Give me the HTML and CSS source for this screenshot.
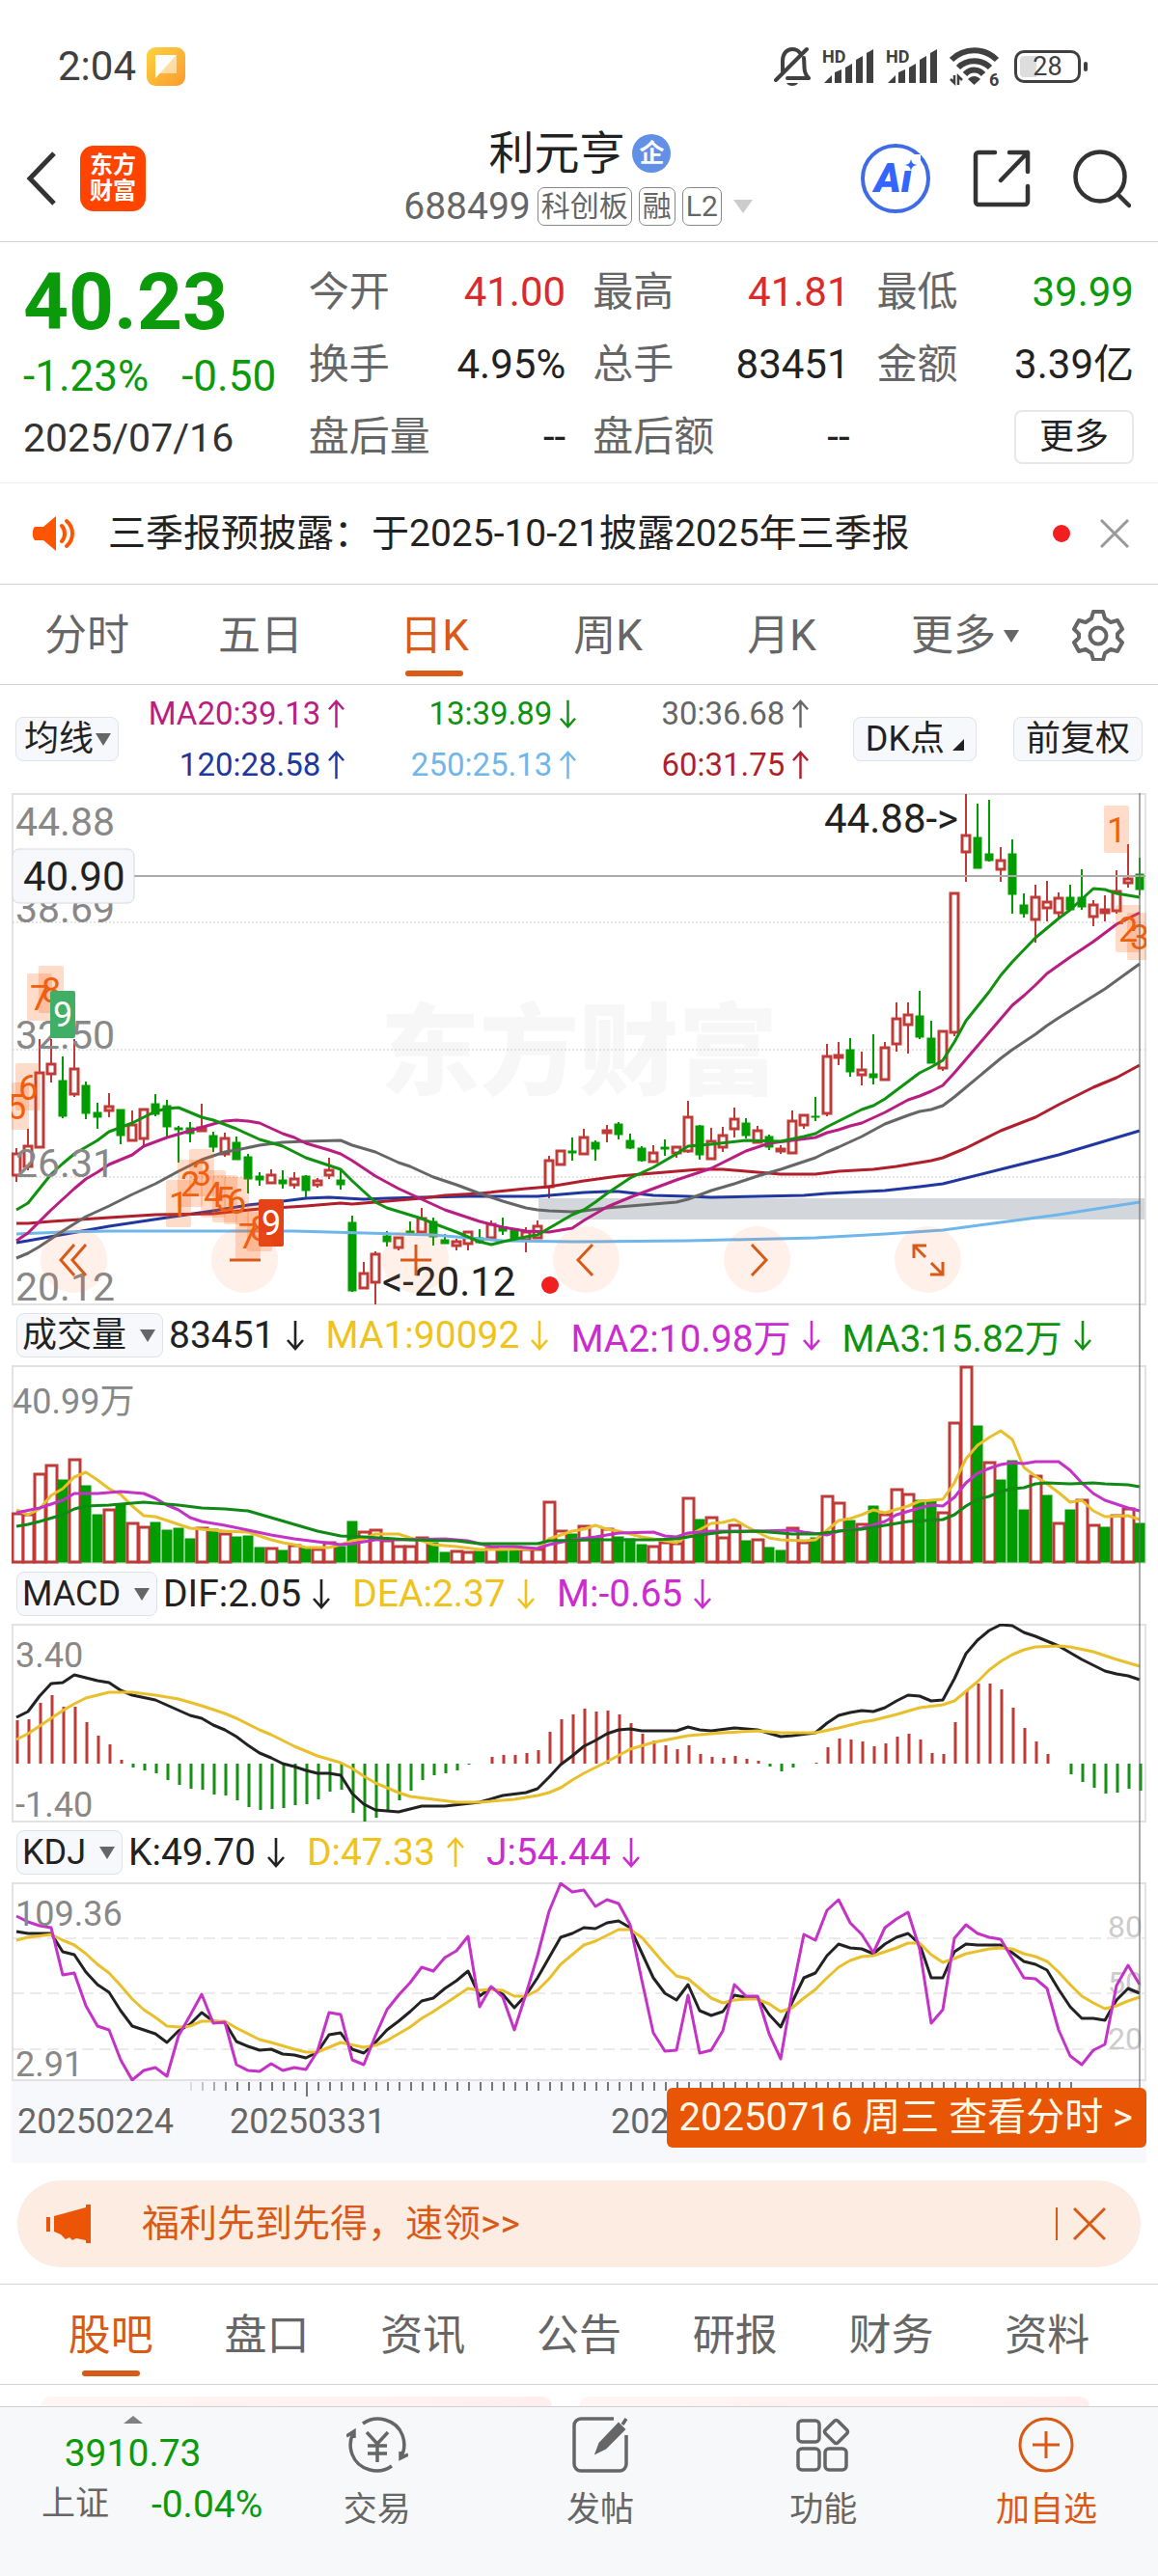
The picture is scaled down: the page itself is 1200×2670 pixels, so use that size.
FILE: index.html
```html
<!DOCTYPE html>
<html lang="zh-CN">
<head>
<meta charset="UTF-8" />
<meta name="viewport" content="width=device-width, initial-scale=1" />
<title>利元亨 688499</title>
<link rel="stylesheet" href="styles.css">
</head>
<body>

<svg class="defs" aria-hidden="true">
  <symbol id="up" viewBox="0 0 18 32"><path d="M9 31V2M1 11L9 2l8 9" fill="none" stroke="currentColor" stroke-width="2.6"/></symbol>
  <symbol id="down" viewBox="0 0 18 32"><path d="M9 1v29M1 21l8 9 8-9" fill="none" stroke="currentColor" stroke-width="2.6"/></symbol>
  <symbol id="signal" viewBox="0 0 54 38">
    <text x="0" y="15" font-size="18" font-weight="700" fill="currentColor">HD</text>
    <path d="M2 36l8-8v8zM13 36V25l7-3v14zM24 36V20l7-4v20zM35 36V12l7-4v28zM46 36V5l7-4v35z" fill="currentColor"/>
  </symbol>
</svg>

<div class="status">
  <span class="time">2:04</span>
  <svg class="note" viewBox="0 0 40 40">
    <defs><linearGradient id="gold" x1="0" y1="0" x2="1" y2="1"><stop offset="0" stop-color="#fbd440"/><stop offset="1" stop-color="#fb9a2e"/></linearGradient></defs>
    <rect width="40" height="40" rx="9" fill="url(#gold)"/>
    <path d="M9 8h22L9 32z" fill="#fff"/><path d="M31 8v19H13z" fill="#fff" opacity=".55"/>
  </svg>
  <div class="status-icons">
    <svg width="38" height="42" viewBox="0 0 38 42" fill="none" stroke="currentColor" stroke-width="4">
      <path d="M9 26V15c0-7 4-12 10-12 3 0 6 1 8 4M31 12c1 9-1 15 5 21H14M2 35L34 3" stroke-linecap="round" stroke-linejoin="round"/>
      <path d="M13 38h12c-2 4-10 4-12 0z" fill="currentColor" stroke="none"/>
    </svg>
    <svg width="54" height="38"><use href="#signal"/></svg>
    <svg width="54" height="38"><use href="#signal"/></svg>
    <svg width="52" height="42" viewBox="0 0 52 42" fill="none" stroke="currentColor" stroke-width="6">
      <path d="M2 14c13-13 34-13 47 0M9 22c9-9 24-9 33 0M16 29c5-6 14-6 19 0"/>
      <path d="M19 34l6.500 6 6.500-6c-4-4-9-4-13 0z" fill="currentColor" stroke="none"/>
      <path d="M1 34l4 4V30M13 35l-4-4v9" stroke-width="2.500"/>
      <text x="41" y="41" font-size="18" font-weight="700" fill="currentColor" stroke="none">6</text>
    </svg>
    <div class="battery">28</div>
  </div>
</div>

<header class="header">
  <a href="#" class="back" aria-label="返回"><svg width="34" height="58" viewBox="0 0 34 58"><path d="M30 3L5 29l25 26" fill="none" stroke="#333" stroke-width="5"/></svg></a>
  <a href="#" class="logo">东方<br>财富</a>
  <div class="stock">
    <h1>利元亨<span class="corp">企</span></h1>
    <div class="code">688499 <span class="tag">科创板</span><span class="tag">融</span><span class="tag">L2</span><i class="caret"></i></div>
  </div>
  <div class="actions">
    <button aria-label="AI"><svg width="72" height="74" viewBox="0 0 72 74"><circle cx="36" cy="37" r="34" fill="none" stroke="#3f6be6" stroke-width="4"/><text x="14" y="51" font-size="42" font-weight="900" font-style="italic" fill="#3366ff">Ai</text><path d="M44 12h18v17H44z" fill="#fff"/><path d="M52 17c1 4 2 5 6 6-4 1-5 2-6 6-1-4-2-5-6-6 4-1 5-2 6-6z" fill="#3366ff"/></svg></button>
    <button aria-label="分享"><svg width="60" height="60" viewBox="0 0 60 60" fill="none" stroke="#333" stroke-width="4.500" stroke-linecap="round" stroke-linejoin="round"><path d="M23 3H6a3 3 0 0 0-3 3v48a3 3 0 0 0 3 3h48a3 3 0 0 0 3-3V38M38 3h19v20M57 3L29 32"/></svg></button>
    <button aria-label="搜索"><svg width="60" height="62" viewBox="0 0 60 62" fill="none" stroke="#333" stroke-width="4.500" stroke-linecap="round"><circle cx="28" cy="29" r="25.500"/><path d="M47 48l11 11"/></svg></button>
  </div>
</header>

<section class="quote">
  <div class="price down">
    <div class="last">40.23</div>
    <div class="change"><span>-1.23%</span><span>-0.50</span></div>
    <div class="date">2025/07/16</div>
  </div>
  <dl class="stats">
    <div><dt>今开</dt><dd class="up">41.00</dd></div>
    <div><dt>最高</dt><dd class="up">41.81</dd></div>
    <div><dt>最低</dt><dd class="down">39.99</dd></div>
    <div><dt>换手</dt><dd>4.95%</dd></div>
    <div><dt>总手</dt><dd>83451</dd></div>
    <div><dt>金额</dt><dd>3.39亿</dd></div>
    <div><dt>盘后量</dt><dd>--</dd></div>
    <div><dt>盘后额</dt><dd>--</dd></div>
    <div class="more"><button>更多</button></div>
  </dl>
</section>

<section class="notice">
  <svg width="46" height="38" viewBox="0 0 46 38" fill="none" stroke="#ff5500" stroke-width="4">
    <path d="M3 12h9L25 1v36L12 26H3c-3-3-3-11 0-14z" fill="#ff5500" stroke="none"/>
    <path d="M31 11c4 4 4 12 0 16M36 6c8 7 8 19 0 26" stroke-linecap="round"/>
  </svg>
  <a href="#">三季报预披露：于2025-10-21披露2025年三季报</a>
  <i class="dot"></i>
  <button aria-label="关闭"><svg width="30" height="30" viewBox="0 0 30 30"><path d="M1 1l28 28M29 1L1 29" stroke="#999" stroke-width="3"/></svg></button>
</section>

<nav class="periods">
  <a href="#">分时</a>
  <a href="#">五日</a>
  <a href="#" class="active">日K</a>
  <a href="#">周K</a>
  <a href="#">月K</a>
  <button class="period-more">更多<i class="caret"></i></button>
  <button class="gear" aria-label="设置"><svg width="54" height="54" viewBox="0 0 54 54" fill="none" stroke="#666" stroke-width="4"><path d="M22 3h10l2 7 6 4 7-2 5 9-5 5v4l5 5-5 9-7-2-6 4-2 7H22l-2-7-6-4-7 2-5-9 5-5v-4l-5-5 5-9 7 2 6-4z" stroke-linejoin="round"/><circle cx="27" cy="28" r="8.500"/></svg></button>
</nav>

<section class="averages">
  <label class="pick"><select aria-label="主图指标"><option>均线</option></select></label>
  <div class="ma">
    <span class="c-ma20">MA20:39.13<svg><use href="#up"/></svg></span>
    <span class="c-green">13:39.89<svg><use href="#down"/></svg></span>
    <span class="c-gray">30:36.68<svg><use href="#up"/></svg></span>
    <span class="c-blue">120:28.58<svg><use href="#up"/></svg></span>
    <span class="c-sky">250:25.13<svg><use href="#up"/></svg></span>
    <span class="c-red">60:31.75<svg><use href="#up"/></svg></span>
  </div>
  <div class="chips">
    <button class="chip dk">DK点</button>
    <button class="chip">前复权</button>
  </div>
</section>

<section class="charts">
  <div class="main-chart">
    <svg id="kline" viewBox="0 -1 1176 531"></svg>
    <div class="tools">
      <button aria-label="最左"><svg viewBox="0 0 40 40"><path d="M20 4L6 20l14 16M32 4L18 20l14 16"/></svg></button>
      <button aria-label="缩小"><svg viewBox="0 0 40 40"><path d="M4 20h32"/></svg></button>
      <button aria-label="放大"><svg viewBox="0 0 40 40"><path d="M4 20h32M20 4v32"/></svg></button>
      <button aria-label="左移"><svg viewBox="0 0 40 40"><path d="M26 4L11 20l15 16"/></svg></button>
      <button aria-label="右移"><svg viewBox="0 0 40 40"><path d="M14 4l15 16-15 16"/></svg></button>
      <button aria-label="全屏"><svg viewBox="0 0 40 40"><path d="M5 18V5h13M5 5l12 12M22 35h13V22M35 35L23 23"/></svg></button>
    </div>
  </div>

  <div class="legend">
    <label class="pick wide"><select aria-label="副图一"><option>成交量</option></select></label>
    <span>83451<svg><use href="#down"/></svg></span>
    <span class="c-yellow">MA1:90092<svg><use href="#down"/></svg></span>
    <span class="c-purple">MA2:10.98万<svg><use href="#down"/></svg></span>
    <span class="c-green">MA3:15.82万<svg><use href="#down"/></svg></span>
  </div>
  <svg id="volume" viewBox="0 -1 1176 206"></svg>

  <div class="legend">
    <label class="pick wide"><select aria-label="副图二"><option>MACD</option></select></label>
    <span>DIF:2.05<svg><use href="#down"/></svg></span>
    <span class="c-yellow">DEA:2.37<svg><use href="#down"/></svg></span>
    <span class="c-purple">M:-0.65<svg><use href="#down"/></svg></span>
  </div>
  <svg id="macd" viewBox="0 -1 1176 206"></svg>

  <div class="legend">
    <label class="pick wide"><select aria-label="副图三"><option>KDJ</option></select></label>
    <span>K:49.70<svg><use href="#down"/></svg></span>
    <span class="c-yellow">D:47.33<svg><use href="#up"/></svg></span>
    <span class="c-purple">J:54.44<svg><use href="#down"/></svg></span>
  </div>
  <svg id="kdj" viewBox="0 -1 1176 206"></svg>

  <svg id="axis" viewBox="0 0 1176 85"></svg>
  <i class="crosshair"></i>
  <a href="#" class="day">20250716 周三 查看分时 &gt;</a>
</section>

<section class="promo">
  <svg width="46" height="40" viewBox="0 0 46 40" fill="#eb5505"><path d="M0 13h4v15H0zM8 12L41 3V0h5v40h-5v-3l-10-2-4 2-3-3-4 2-5-5-7-3z"/></svg>
  <a href="#">福利先到先得，速领&gt;&gt;</a>
  <button aria-label="关闭"><svg width="34" height="34" viewBox="0 0 34 34"><path d="M1 1l32 32M33 1L1 33" stroke="#d95a16" stroke-width="3"/></svg></button>
</section>

<nav class="sections">
  <a href="#" class="active">股吧</a>
  <a href="#">盘口</a>
  <a href="#">资讯</a>
  <a href="#">公告</a>
  <a href="#">研报</a>
  <a href="#">财务</a>
  <a href="#">资料</a>
</nav>

<div class="cards"><div></div><div></div></div>

<footer class="bar">
  <a href="#" class="index">
    <i class="tri"></i>
    <b>3910.73</b>
    <span class="row"><span>上证</span><span class="down">-0.04%</span></span>
  </a>
  <a href="#">
    <svg viewBox="0 0 64 60" fill="none" stroke="#666" stroke-width="3.500"><path d="M17 8C31-2 52 4 58 20c3 8 2 16-1 22M47 52C33 62 12 56 6 40c-3-8-2-16 1-22M0 21l8-5v7M64 40l-8 4v-7M21 17l11 12 11-12M32 29v19M22 31h20M22 39h20"/></svg>
    交易
  </a>
  <a href="#">
    <svg viewBox="0 0 64 60" fill="none" stroke="#666" stroke-width="3.500"><path d="M46 3H12a7 7 0 0 0-7 7v40a7 7 0 0 0 7 7h40a7 7 0 0 0 7-7V20"/><path d="M55 9l4-6M29 37l3-8L51 9l5 5-19 19z" fill="#666"/></svg>
    发帖
  </a>
  <a href="#">
    <svg viewBox="0 0 64 60" fill="none" stroke="#666" stroke-width="3.500"><rect x="6" y="5" width="22" height="22" rx="4"/><rect x="6" y="34" width="22" height="22" rx="4"/><rect x="34" y="34" width="22" height="22" rx="4"/><path d="M43.500 5.500q2-2 4 0l9 9q2 2 0 4l-9 9q-2 2-4 0l-9-9q-2-2 0-4z"/></svg>
    功能
  </a>
  <a href="#" class="add">
    <svg viewBox="0 0 64 60" fill="none" stroke="#d95a16" stroke-width="3"><circle cx="32" cy="30" r="27"/><path d="M18 30h28M32 16v28"/></svg>
    加自选
  </a>
</footer>

<script src="script.js"></script>
</body>
</html>
```

FILE: styles.css
```css
* {
  box-sizing: border-box;
}
body {
  margin: 0;
  background: #fff;
  color: #222;
  font-family: Roboto, "Noto Sans CJK SC", sans-serif;
  font-size: 42px;
}
a {
  color: inherit;
  text-decoration: none;
}
button, select {
  font: inherit;
  color: inherit;
  background: none;
  border: 0;
  padding: 0;
  margin: 0;
}
svg {
  display: block;
}
.defs {
  position: absolute;
  width: 0;
  height: 0;
}
.up { color: #d92b2b; }
.down { color: #0a9a0a; }
.c-ma20 { color: #b91d82; }
.c-green { color: #0f930f; }
.c-gray { color: #666; }
.c-blue { color: #2137a0; }
.c-sky { color: #6fb7ea; }
.c-red { color: #b01f2b; }
.c-yellow { color: #efc31c; }
.c-purple { color: #cb2bd0; }

.caret {
  display: inline-block;
  border: 8px solid transparent;
  border-top: 13px solid #666;
  border-bottom: 0;
}

/* status bar */
.status {
  display: flex;
  align-items: center;
  padding: 44px 80px 0 60px;
  line-height: 50px;
  color: #404040;
}
.note {
  width: 40px;
  height: 40px;
  margin-left: 11px;
}
.status-icons {
  display: flex;
  align-items: center;
  gap: 12px;
  margin-left: auto;
}
.battery {
  position: relative;
  width: 69px;
  height: 34px;
  margin-left: 3px;
  border: 3px solid #404040;
  border-radius: 10px;
  background: linear-gradient(90deg, #ddd 32%, #fff 32%);
  box-shadow: inset 0 0 0 3px #fff;
  font-size: 27px;
  line-height: 29px;
  text-align: center;
}
.battery::after {
  content: "";
  position: absolute;
  right: -10px;
  top: 9px;
  width: 4px;
  height: 10px;
  border-radius: 2px;
  background: #404040;
}

/* header */
.header {
  display: grid;
  grid-template-columns: 1fr auto 1fr;
  grid-template-areas: "left stock right";
  align-items: center;
  padding: 34px 28px 9px 26px;
  border-bottom: 1px solid #d5d5d5;
}
.back {
  grid-area: left;
}
.logo {
  grid-area: left;
  width: 68px;
  margin-left: 57px;
  padding: 7px 0;
  border-radius: 14px;
  background: #ff4400;
  color: #fff;
  font-size: 24px;
  font-weight: 700;
  line-height: 27px;
  text-align: center;
}
.stock {
  grid-area: stock;
  padding-top: 3px;
  text-align: center;
}
.stock h1 {
  display: flex;
  align-items: center;
  justify-content: center;
  gap: 8px;
  margin: 0;
  padding-left: 4px;
  font-size: 47px;
  font-weight: 400;
  line-height: 56px;
}
.corp {
  width: 40px;
  border-radius: 50%;
  background: #6190e6;
  color: #fff;
  font-size: 26px;
  font-weight: 700;
  line-height: 40px;
}
.code {
  display: flex;
  align-items: center;
  gap: 7px;
  color: #666;
  font-size: 39px;
  line-height: 54px;
}
.tag {
  padding: 0 3px;
  border: 1px solid #888;
  border-radius: 7px;
  font-size: 30px;
  line-height: 38px;
}
.code .caret {
  margin-left: 5px;
  border-width: 14px 10px 0;
  border-top-color: #ccc;
}
.actions {
  grid-area: right;
  display: flex;
  align-items: center;
  justify-content: flex-end;
  gap: 44px;
}

/* quote */
.quote {
  display: flex;
  padding: 14px 25px 10px 24px;
  border-bottom: 1px solid #eee;
}
.price {
  flex: 0 0 25%;
  margin-right: 8px;
  padding-top: 6px;
}
.last {
  font-size: 82px;
  font-weight: 700;
  line-height: 84px;
}
.change {
  display: flex;
  gap: 34px;
  font-size: 44px;
  line-height: 70px;
}
.date {
  color: #333;
  font-size: 41px;
  line-height: 58px;
}
.stats {
  flex: 1;
  display: grid;
  grid-template-columns: repeat(3, 1fr);
  column-gap: 28px;
  margin: 0;
  line-height: 75px;
}
.stats div {
  display: flex;
  justify-content: space-between;
}
.stats dt {
  color: #666;
}
.stats dd {
  margin: 0;
}
.stats .more {
  justify-content: flex-end;
  align-items: center;
}
.more button {
  padding: 0 24px;
  border: 2px solid #e8e8e8;
  border-radius: 8px;
  font-size: 36px;
  line-height: 52px;
}

/* notice */
.notice {
  display: flex;
  align-items: center;
  padding: 0 30px 0 33px;
  border-bottom: 1px solid #d5d5d5;
  font-size: 39px;
  line-height: 104px;
}
.notice a {
  flex: 1;
  margin-left: 33px;
}
.dot {
  width: 18px;
  height: 18px;
  margin-right: 31px;
  border-radius: 50%;
  background: #f02020;
}

/* tabs */
.periods, .sections {
  display: flex;
  border-bottom: 1px solid #d5d5d5;
  color: #666;
  font-size: 44px;
  line-height: 99px;
  text-align: center;
}
.periods {
  padding-right: 24px;
}
.periods > * {
  flex: 180;
  padding-top: 4px;
}
.periods .period-more {
  flex: 200;
}
.periods .gear {
  flex: 76;
  display: flex;
  align-items: center;
  justify-content: center;
  padding-top: 0;
}
.period-more .caret {
  margin: 0 0 8px 8px;
}
.active {
  position: relative;
  color: #d95a16;
}
.active::after {
  content: "";
  position: absolute;
  left: 50%;
  bottom: 8px;
  width: 60px;
  height: 6px;
  margin-left: -30px;
  border-radius: 3px;
  background: #d95a16;
}

/* moving averages */
.averages {
  display: flex;
  align-items: center;
  justify-content: space-between;
  padding: 3px 16px;
  font-size: 36px;
}
.pick {
  position: relative;
  display: block;
}
.pick select {
  display: block;
  appearance: none;
  height: 46px;
  padding: 0 24px 0 8px;
  border: 1px solid #dfe2e6;
  border-radius: 8px;
  background: #f7f8fb;
  font-size: 36px;
  line-height: 44px;
}
.pick::after {
  content: "";
  position: absolute;
  right: 8px;
  top: 17px;
  border: 8px solid transparent;
  border-top: 13px solid #666;
  border-bottom: 0;
  pointer-events: none;
}
.pick.wide select {
  padding: 0 36px 0 5px;
}
.ma {
  flex: 0 0 712px;
  display: grid;
  grid-template-columns: 231px 240px 241px;
  margin-right: 42px;
  font-size: 33px;
  line-height: 53px;
}
.ma span {
  display: flex;
  align-items: center;
  justify-content: flex-end;
  gap: 8px;
}
.ma svg {
  width: 17px;
  height: 32px;
}
.chips {
  display: flex;
  gap: 38px;
}
.chip {
  padding: 0 12px;
  border: 1px solid #dfe2e6;
  border-radius: 8px;
  background: #f7f8fb;
  line-height: 44px;
}
.dk::after {
  content: "";
  display: inline-block;
  margin-left: 8px;
  border-left: 12px solid transparent;
  border-bottom: 12px solid #222;
}

/* charts */
.charts {
  position: relative;
  margin: 0 12px;
}
.charts > svg, .main-chart > svg {
  width: 100%;
  height: auto;
}
.main-chart {
  position: relative;
}
.tools {
  position: absolute;
  left: 30px;
  right: 192px;
  bottom: 13px;
  display: flex;
  justify-content: space-between;
}
.tools button {
  display: flex;
  align-items: center;
  justify-content: center;
  width: 69px;
  height: 69px;
  border-radius: 50%;
  background: rgba(255, 110, 40, 0.1);
}
.tools svg {
  width: 40px;
  height: 40px;
  fill: none;
  stroke: #d95a16;
  stroke-width: 3;
}
.legend {
  display: flex;
  align-items: center;
  height: 62px;
  padding-left: 5px;
  font-size: 39px;
}
.legend span {
  display: flex;
  align-items: center;
  gap: 12px;
  margin-right: 23px;
}
.legend .pick {
  margin-right: 6px;
}
.legend span svg {
  width: 18px;
  height: 34px;
}
.crosshair {
  position: absolute;
  right: 6px;
  top: 0;
  bottom: 78px;
  width: 2px;
  background: rgba(110, 110, 110, 0.6);
}
.day {
  position: absolute;
  right: 0;
  bottom: 16px;
  padding: 0 14px 0 12px;
  border-radius: 6px;
  background: #e85504;
  color: #fff8ea;
  font-size: 40px;
  line-height: 62px;
}
#axis {
  background: #f7f8fb;
}

/* chart drawing */
.axis-label { fill: #888; font-size: 41px; }
.axis-label.small { font-size: 36px; }
.level { fill: #ccc; font-size: 32px; }
.frame { fill: none; stroke: #e2e2e2; stroke-width: 2; }
.grid { stroke: #ccc; stroke-width: 1; stroke-dasharray: 2 2; }
.grid.dash { stroke: #d6d6d6; stroke-dasharray: 12 6; }
.watermark { fill: #f7f7f7; font-size: 103px; font-weight: 900; }
.note-text { fill: #222; font-size: 42px; }
.rise { fill: #fff; stroke: #bf3b38; stroke-width: 3; }
.fall { fill: #009c00; stroke: #009c00; stroke-width: 1; }
.wick { stroke-width: 2; }
.line { fill: none; stroke-width: 3; stroke-linejoin: round; }
.sig { fill: #ff5a0a; fill-opacity: 0.22; }
.sig-text { fill: #ee600f; font-size: 36px; }
.tick { stroke: #777; stroke-width: 2; }

/* promo */
.promo {
  display: flex;
  align-items: center;
  margin: 18px 18px 17px;
  padding: 0 36px 0 30px;
  border-radius: 45px;
  background: #fcece2;
  color: #d95a16;
  font-size: 39px;
  line-height: 90px;
}
.promo a {
  flex: 1;
  margin-left: 53px;
}
.promo button {
  padding-left: 16px;
  border-left: 2px solid #d95a16;
}

/* sections */
.sections {
  padding: 0 34px;
  border-top: 1px solid #d5d5d5;
}
.sections a {
  flex: 1;
  padding-top: 4px;
}
.cards {
  display: grid;
  grid-template-columns: 1fr 1fr;
  gap: 28px;
  padding: 12px 71px 0 42px;
}
.cards div {
  height: 10px;
  border-radius: 24px 24px 0 0;
  background: linear-gradient(90deg, #fff6f4, #feefee);
}

/* bottom bar */
.bar {
  display: grid;
  grid-template-columns: 275fr 231fr 231fr 231fr 231fr;
  padding-bottom: 38px;
  border-top: 1px solid #cfd0d4;
  background: #f7f8fa;
  color: #666;
  font-size: 35px;
}
.bar a {
  display: flex;
  flex-direction: column;
  align-items: center;
  padding-top: 9px;
  line-height: 60px;
}
.bar a > svg {
  width: 64px;
  height: 60px;
  margin-bottom: 8px;
}
.bar .add {
  color: #d95a16;
}
.bar .tri {
  margin-bottom: 3px;
  border: 10px solid transparent;
  border-top: 0;
  border-bottom: 8px solid #808080;
}
.bar b {
  color: #0a9a0a;
  font-size: 39px;
  font-weight: 400;
  line-height: 56px;
}
.bar .row {
  display: flex;
  gap: 44px;
  padding-left: 40px;
  line-height: 50px;
}
.bar .row .down {
  font-size: 39px;
}
```

FILE: script.js
```js
const NS = 'http://www.w3.org/2000/svg';
const x = i => 5 + 12 * i;

function add(svg, tag, attrs, text) {
  const el = document.createElementNS(NS, tag);
  for (const k in attrs) el.setAttribute(k, attrs[k]);
  if (text) el.textContent = text;
  svg.appendChild(el);
  return el;
}

// points are "index,y" pairs
function line(svg, color, points) {
  const pts = points.trim().split(/\s+/).map(p => {
    const [i, y] = p.split(',').map(Number);
    return x(i) + ',' + y;
  });
  add(svg, 'polyline', { class: 'line', stroke: color, points: pts.join(' ') });
}

function frame(svg, h) {
  add(svg, 'rect', { class: 'frame', x: 1, y: 0, width: 1174, height: h });
}

function grid(svg, ys, cls) {
  ys.forEach(y => add(svg, 'line', { class: cls, x1: 1, x2: 1174, y1: y, y2: y }));
}

function label(svg, px, y, text, cls) {
  add(svg, 'text', { class: cls, x: px, y: y }, text);
}

// ---- daily candles: color, high, body top, body bottom, low ----
const candles = `r367,373,395,402 r347,365,386,390 r254,289,366,366 r254,280,290,299 g272,297,334,336 r254,285,311,314
g298,302,331,337 g320,330,335,347 r310,324,328,335 g327,327,354,363 r328,343,359,359 r327,327,357,365 g311,321,332,334
g317,323,345,355 g344,346,348,382 g340,346,352,361 r321,346,349,349 g350,354,366,371 r351,357,373,376 g355,361,379,379
g373,376,399,414 g392,396,400,406 r389,395,403,403 g390,400,404,409 r392,399,405,409 g395,396,411,419 r398,401,405,408
r377,390,395,399 g390,400,405,410 g437,444,515,516 r485,497,512,512 r474,477,506,529 g453,458,464,469 r459,460,470,473
g443,453,455,455 r429,440,454,454 g439,443,459,468 g456,462,466,466 r461,464,468,473 r454,454,466,473 g451,460,465,466
r442,446,460,460 g439,449,453,457 g450,451,462,463 r449,454,462,475 r442,448,460,460 r375,380,407,419 r370,370,384,384
g356,370,372,380 r347,356,373,373 g359,361,368,380 r343,349,351,361 g340,342,353,358 g352,359,367,368 g365,367,380,381
r364,372,381,381 g358,366,368,375 r365,366,372,377 r318,335,370,372 g343,344,374,379 r346,360,378,378 r345,354,366,371
r325,337,347,356 g336,341,354,357 r344,349,361,361 g353,355,366,369 r364,368,370,373 r328,339,372,373 r332,333,343,347
g314,334,335,339 r259,272,331,334 r257,271,273,281 g253,265,288,293 r267,286,291,302 g249,290,294,301 r257,263,296,297
r216,233,259,267 r216,229,239,269 g204,230,252,254 g235,253,279,279 r245,246,284,287 r103,103,247,251 r0,43,60,91
g10,45,77,77 g6,62,69,70 r55,69,78,91 g47,62,104,124 g103,115,124,128 r94,107,130,154 r90,112,118,132 r102,108,123,129
g94,107,120,120 g78,107,117,120 r110,115,127,137 r105,120,123,132 r79,101,121,124 r52,88,92,97 g66,83,99,105`;

const kline = document.getElementById('kline');
frame(kline, 529);
label(kline, 382, 304, '东方财富', 'watermark');
grid(kline, [133, 265, 397], 'grid');
add(kline, 'rect', { x: 546, y: 419, width: 628, height: 22, fill: '#d3d7dc' });

candles.split(/\s+/).forEach((c, i) => {
  const [high, top, bottom, low] = c.slice(1).split(',').map(Number);
  const cls = c[0] === 'r' ? 'rise' : 'fall';
  add(kline, 'line', { class: cls + ' wick', x1: x(i), x2: x(i), y1: high, y2: low });
  add(kline, 'rect', { class: cls, x: x(i) - 4, y: top, width: 8, height: Math.max(bottom - top, 1) });
});

line(kline, '#2137a0', `0,465 1,463 8,448 13,439 17,432 20,426 23,422 25,419 27,418 30,420 32,419 35,418 39,417 45,417 48,414
49,413 51,412 52,412 55,416 58,417 60,418 68,416 70,414 75,411 78,407 80,404 85,389 90,374 97,349`);
line(kline, '#b01f2b', `0,445 1,445 3,443 8,439 12,436 17,435 21,430 25,427 28,424 29,425 32,422 35,419 37,416 40,414 44,409
46,407 48,403 49,401 52,396 55,393 59,389 61,389 63,391 66,394 69,394 71,391 74,389 76,386 77,384 79,380 80,377 82,367
85,349 88,335 90,322 93,304 95,294 97,281`);
line(kline, '#6fb7ea', `0,456 4,454 8,453 17,453 24,453 30,455 36,457 39,460 42,463 48,464 49,464 58,463 69,460 75,456 80,452
85,444 90,436 97,423`);
line(kline, '#666', `0,481 1,476 2,469 4,453 6,438 8,427 10,415 12,404 14,391 16,379 18,371 19,369 21,364 23,361 25,360 28,359
29,364 31,371 33,382 34,386 36,397 38,405 40,414 42,422 44,429 45,431 46,432 48,433 49,432 51,429 53,427 55,425 57,423 58,420
60,411 62,404 64,396 66,389 67,385 69,377 70,371 71,366 73,355 75,342 77,333 78,329 79,327 80,323 81,314 82,304 84,284 85,274
86,265 88,249 89,240 90,232 92,217 94,202 97,176`);
line(kline, '#b91d82', `0,463 1,455 3,431 5,409 6,399 7,392 8,384 10,374 11,365 13,356 15,349 17,342 18,339 19,338 20,339 21,341
23,352 24,356 25,362 27,369 28,373 29,380 31,396 33,409 35,420 37,431 38,435 40,443 42,449 44,453 46,454 48,450 49,442 51,428
53,418 55,409 57,400 58,396 60,388 61,382 63,370 65,362 67,359 69,356 70,351 71,348 72,344 73,341 75,330 77,317 78,313 79,308
80,302 81,289 82,275 84,247 85,233 86,219 87,209 88,198 89,186 91,169 93,153 95,135 97,123`);
line(kline, '#0f930f', `0,431 1,424 3,394 4,383 5,373 6,366 7,359 8,350 10,341 12,329 13,326 14,325 16,335 17,338 19,347 21,358
23,365 25,377 27,385 28,389 29,401 30,412 31,423 32,429 35,440 36,445 38,454 40,464 41,467 42,464 44,459 45,457 46,450 47,443
48,436 49,431 50,423 51,414 53,398 55,387 57,373 58,365 60,363 63,359 66,360 68,355 69,352 70,345 71,339 72,333 73,327 74,323
75,316 76,307 77,298 78,289 79,283 80,276 81,257 82,235 83,220 84,205 85,188 86,174 88,149 90,129 91,120 92,109 93,98 94,99
95,103 96,105 97,107`);

[[43, '44.88'], [133, '38.69'], [264, '32.50'], [397, '26.31'], [525, '20.12']].forEach(
  ([y, t]) => label(kline, 4, y, t, 'axis-label'));

// nine-turn markers: index, top, digit
[[0, 299, 5], [1, 279, 6], [2, 186, 7], [3, 178, 8], [14, 400, 1], [15, 379, 2], [16, 368, 3], [17, 390, 4], [18, 395, 5],
 [19, 397, 6], [20, 433, 7], [21, 425, 8], [95, 12, 1], [96, 115, 2], [97, 123, 3]].forEach(([i, y, n]) => {
  const left = Math.max(x(i) - 13, 0);
  add(kline, 'rect', { class: 'sig', x: left, y: y, width: x(i) + 13 - left, height: 49, rx: 2 });
  add(kline, 'text', { class: 'sig-text', x: x(i), y: y + 38, 'text-anchor': 'middle' }, String(n));
});
[[4, 204, '#40ae64'], [22, 420, '#e54316']].forEach(([i, y, color]) => {
  add(kline, 'rect', { x: x(i) - 13, y: y, width: 26, height: 49, rx: 2, fill: color });
  add(kline, 'text', { x: x(i), y: y + 37, 'text-anchor': 'middle', fill: '#fff', 'font-size': 36 }, '9');
});

label(kline, 842, 40, '44.88->', 'note-text');
label(kline, 384, 520, '<-20.12', 'note-text');
add(kline, 'circle', { cx: 558, cy: 509, r: 9, fill: '#f02020' });
add(kline, 'line', { x1: 127, x2: 1175, y1: 85, y2: 85, stroke: '#aaa', 'stroke-width': 2 });
add(kline, 'rect', { x: 1, y: 57, width: 126, height: 56, rx: 7, fill: '#f7f8fb', stroke: '#d5d8dc' });
label(kline, 12, 100, '40.90', 'note-text');

// ---- volume: bar heights, negative is a falling day ----
const volumes = [50, 49, 91, 100, -85, 106, -79, -49, 54, -60, 40, 36, -41, -33, -35, -24, 35, -34, 29, -26, -27, -15, 14, -12,
  17, -15, 13, 20, -16, -42, 31, 33, 22, 16, 16, 25, -20, -10, 11, 10, -11, 14, -13, -13, 13, 13, 62, 32, -29, 37, -25, 34,
  -26, -24, -18, 16, 20, 19, 66, -44, 46, 25, 38, -22, 23, -15, -12, 35, 20, -25, 68, 61, -43, 39, -58, 49, 75, 70, -64, -64,
  51, 144, 202, -141, 103, -85, -105, -54, 89, -69, 40, -54, 64, 38, -36, 48, 55, -40];

const volume = document.getElementById('volume');
frame(volume, 204);
volumes.forEach((v, i) => {
  const h = Math.abs(v);
  add(volume, 'rect', { class: v > 0 ? 'rise' : 'fall', x: Math.max(x(i) - 5, 1), y: 203 - h, width: v > 0 ? 11 : 10, height: h });
});
line(volume, '#e9c02c', `0,149 1,154 2,148 3,134 4,127 5,115 6,110 7,118 8,127 9,133 10,145 11,155 12,156 13,160 14,164 15,168
16,169 18,171 20,172 21,176 22,180 23,183 24,185 25,188 27,188 28,185 29,181 30,179 31,174 33,174 34,178 35,181 36,185 38,187
40,190 42,190 45,189 46,179 48,171 49,169 50,165 51,169 52,171 54,177 57,183 58,176 60,163 61,162 62,159 63,166 65,178 66,180
68,181 69,180 70,170 71,160 72,158 73,154 74,149 75,152 77,145 78,140 80,138 81,121 82,96 83,82 84,74 85,67 86,76 87,105
88,114 89,122 90,131 91,141 92,139 93,150 94,156 96,155 97,159`);
line(volume, '#c532c8', `0,152 2,147 4,139 5,132 7,132 9,130 11,132 12,137 13,144 14,149 15,157 16,161 18,165 20,170 22,175
24,179 26,182 28,185 29,184 31,180 33,180 37,179 39,181 41,187 43,187 45,189 46,185 48,180 50,177 52,173 55,172 56,176 57,177
58,173 60,171 64,171 67,170 68,172 70,175 71,171 73,168 75,161 76,154 78,147 79,144 80,145 81,136 82,121 83,111 84,106 85,102
86,100 87,101 88,99 90,99 91,108 92,121 93,132 94,139 95,143 96,147 97,150`);
line(volume, '#0f8a14', `0,166 1,164 2,161 4,154 5,148 6,145 8,144 11,141 14,144 16,147 18,148 20,150 22,157 24,164 26,171
28,176 30,177 34,180 38,181 40,184 45,184 46,181 50,180 55,180 57,179 59,175 61,172 64,171 67,174 69,174 71,171 73,169 75,165
77,161 80,159 81,154 82,145 83,138 84,135 85,130 86,127 87,126 88,122 89,121 91,122 93,121 94,122 96,123 97,125`);
label(volume, 1, 49, '40.99万', 'axis-label small');

// ---- MACD ----
const bars = [45, 46, 63, 71, 59, 59, 43, 29, 20, 4, -4, -7, -10, -17, -22, -26, -27, -32, -33, -38, -45, -48, -47, -46, -43,
  -42, -37, -29, -27, -51, -60, -56, -48, -38, -28, -17, -12, -10, -7, -1, 0, 7, 9, 9, 11, 14, 33, 46, 51, 57, 54, 55, 51, 42,
  31, 24, 19, 15, 19, 10, 7, 6, 8, 5, 3, -3, -8, -4, 0, 1, 17, 26, 25, 23, 18, 21, 28, 31, 25, 11, 10, 43, 76, 83, 83, 77, 58,
  37, 23, 10, 0, -11, -19, -25, -31, -30, -26, -28];

const macd = document.getElementById('macd');
frame(macd, 204);
bars.forEach((v, i) => {
  add(macd, 'line', { x1: x(i) + 1, x2: x(i) + 1, y1: 144, y2: 144 - v, stroke: v > 0 ? '#bf3b38' : '#159015', 'stroke-width': 3 });
});
line(macd, '#222', `0,96 1,90 2,74 3,61 4,60 5,52 7,58 8,60 9,68 10,73 12,78 15,94 16,97 17,104 18,109 19,116 20,125 21,133
22,138 23,144 24,147 25,151 26,154 27,154 28,156 29,175 30,186 31,192 33,194 34,191 35,188 37,188 40,184 42,177 44,174 45,170
46,158 47,145 48,136 49,126 50,120 51,113 52,109 53,108 54,110 57,110 58,106 59,109 60,110 62,107 64,109 66,116 67,115 69,112
70,102 71,94 72,91 73,89 74,90 75,86 76,79 77,73 78,74 79,79 80,78 81,56 82,30 83,16 84,6 85,0 86,1 87,8 88,12 90,22 92,36
94,48 95,51 96,53 97,57`);
line(macd, '#e9c02c', `0,119 1,113 2,105 3,97 4,89 5,82 6,76 8,70 10,70 12,73 14,77 16,84 18,92 19,97 21,109 22,114 24,126
26,136 28,143 29,149 30,157 31,164 33,174 34,178 36,181 38,184 40,184 43,181 45,177 46,174 47,169 48,161 49,154 51,142 53,129
55,122 58,115 61,112 64,110 66,112 69,112 71,107 73,101 74,99 76,93 78,86 80,83 81,79 82,69 83,59 84,47 85,38 86,31 87,26
88,23 90,22 91,23 93,28 95,36 97,43`);
label(macd, 4, 44, '3.40', 'axis-label small');
label(macd, 4, 199, '-1.40', 'axis-label small');

// ---- KDJ ----
const kdj = document.getElementById('kdj');
frame(kdj, 204);
grid(kdj, [57, 114, 172], 'grid dash');
[[56, '80'], [114, '50'], [172, '20']].forEach(([y, t]) => label(kdj, 1136, y, t, 'level'));
line(kdj, '#222', `0,50 1,52 3,52 4,71 5,74 6,92 7,105 8,113 9,132 10,148 11,152 12,156 13,165 14,153 15,146 16,134 17,143
18,144 19,164 20,169 21,173 22,172 23,177 24,178 25,181 26,175 27,157 28,155 29,172 30,176 31,165 32,152 33,143 34,133 35,122
36,119 37,109 38,101 39,91 40,117 41,108 42,115 43,129 44,116 45,98 46,77 47,56 48,52 49,46 50,47 51,41 52,39 53,46 54,72
55,98 56,114 57,121 58,105 59,132 60,137 61,133 62,116 63,118 64,118 65,136 66,149 67,123 68,98 69,93 70,75 71,63 72,67
73,68 74,73 75,63 76,56 77,52 78,63 79,98 80,98 81,71 82,63 83,64 85,64 86,72 87,81 88,84 89,90 90,110 91,128 92,140 93,140
94,142 95,121 96,109 97,114`);
line(kdj, '#e9c02c', `0,59 1,56 3,53 4,59 5,64 6,73 7,84 8,93 9,106 10,120 11,131 12,139 13,148 14,149 15,148 16,143 18,143
19,150 21,162 22,165 24,172 25,175 26,175 27,170 28,165 30,170 31,168 32,163 34,149 35,140 36,133 38,117 39,109 40,111 41,110
42,111 43,117 44,117 45,111 46,99 47,84 49,64 50,60 52,48 53,48 54,56 55,70 56,84 57,96 58,99 59,109 60,119 61,124 62,121
63,120 64,120 65,125 66,133 67,129 68,119 69,110 70,98 71,87 72,80 73,76 74,75 76,67 77,62 78,62 79,74 80,82 81,78 82,73
84,68 85,67 86,68 87,73 88,76 89,81 90,92 91,105 92,117 93,124 94,130 95,127 96,122 97,118`);
line(kdj, '#c532c8', `0,34 1,40 2,44 3,46 4,95 5,93 6,127 7,148 8,152 9,183 10,204 11,194 12,191 13,200 14,158 15,137 16,115
17,145 18,144 19,188 20,194 21,195 22,187 23,194 24,191 25,193 26,174 27,134 28,136 29,183 30,188 31,158 32,131 33,116
34,103 35,87 36,91 37,77 38,70 39,55 40,128 41,107 42,118 43,152 44,115 45,75 46,29 47,0 48,9 49,7 50,24 51,17 52,21 53,43
54,100 55,155 56,174 57,173 58,116 59,176 60,173 61,153 62,105 63,117 64,117 65,156 66,182 67,112 68,53 69,59 70,28 71,17
72,41 73,53 74,72 75,46 76,37 77,30 78,68 79,145 80,131 81,57 82,43 83,52 84,56 85,58 86,78 87,98 88,99 89,109 90,152 91,179
92,188 93,173 94,167 95,106 96,85 97,105`);
label(kdj, 4, 44, '109.36', 'axis-label small');
label(kdj, 4, 200, '2.91', 'axis-label small');

// ---- dates ----
const axis = document.getElementById('axis');
for (let i = 15; i < 92; i++) {
  const month = i === 25 || i === 58;
  add(axis, 'line', { class: 'tick', x1: x(i) + 1, x2: x(i) + 1, y1: 1, y2: month ? 16 : 10, opacity: Math.min(1, (i - 14) / 5) });
}
[[6, '20250224'], [226, '20250331'], [621, '20250520']].forEach(
  ([px, t]) => add(axis, 'text', { x: px, y: 54, fill: '#666', 'font-size': 36 }, t));
```
